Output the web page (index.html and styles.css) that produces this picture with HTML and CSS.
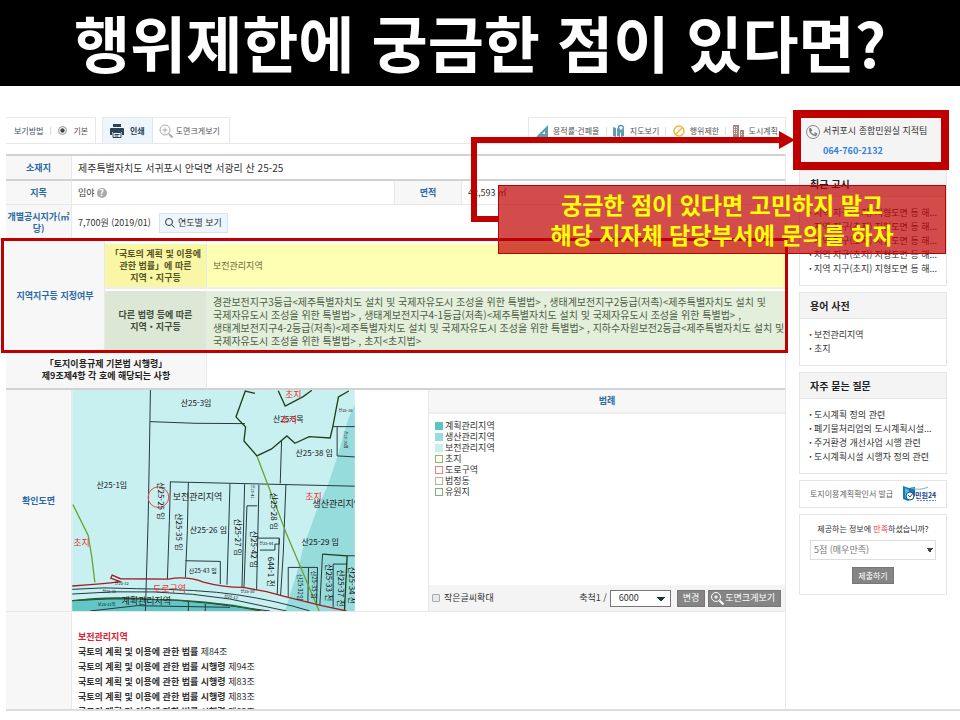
FILE: index.html
```html
<!doctype html>
<html lang="ko">
	<head>
		<title>행위제한에 궁금한 점이 있다면?</title>
		<meta charset="utf-8">
		<meta name="viewport" content="width=device-width, initial-scale=1">
		<link rel="stylesheet" href="styles.css">
	</head>

	<body>
		<h1 class="title">행위제한에 궁금한 점이 있다면?</h1>

		<div class="page">
			<div class="columns">
				<main class="main">
					<div class="toolbar">
						<div class="tools tools-view">
							<span class="tool-name">보기방법</span>
							<span class="bar"></span>
							<label class="radio"><input type="radio" name="view" checked> 기본</label>
						</div>
						<div class="tools tools-print">
							<button type="button" class="tool print">
								<svg width="14" height="14" viewBox="0 0 14 14"><path fill="#2c4257" d="M3 0h8v3H3zM1 4h12q1 0 1 1v6h-2V8H2v3H0V5q0-1 1-1z"/><path fill="#fff" stroke="#2c4257" d="M3 8.500h8v5H3z"/><path stroke="#2c4257" d="M4.500 10.500h5M4.500 12h4"/></svg>
								인쇄
							</button>
							<button type="button" class="tool">
								<svg width="14" height="14" viewBox="0 0 14 14" fill="none" stroke="#aaa"><circle cx="6" cy="6" r="5"/><path d="M6 3.500v5M3.500 6h5"/><path stroke-width="2" d="M10 10l3.500 3.500"/></svg>
								도면크게보기
							</button>
						</div>
						<div class="tools tools-links">
							<a href="#">
								<svg width="12" height="12" viewBox="0 0 12 12"><path fill="#5f9bb3" fill-rule="evenodd" d="M12 0v12H0zM9 6v3H6z"/></svg>
								용적률·건폐율
							</a>
							<span class="bar"></span>
							<a href="#">
								<svg width="12" height="14" viewBox="0 0 12 14"><path fill="#5f9bb3" d="M0 3l3 1v9l-3-1zM4 4l3 2v7l-3-1zM8 7l3-2v7l-3 1z"/><path fill="#fff" stroke="#5f9bb3" stroke-width="1.500" d="M8 8L5.500 4a2.500 2.500 0 1 1 5 0z"/></svg>
								지도보기
							</a>
							<span class="bar"></span>
							<a href="#">
								<svg width="12" height="12" viewBox="0 0 12 12" fill="none" stroke="#f2b53a" stroke-width="1.500"><circle cx="6" cy="6" r="5"/><path d="M2.500 9.500l7-7"/></svg>
								행위제한
							</a>
							<span class="bar"></span>
							<a href="#">
								<svg width="11" height="12" viewBox="0 0 11 12"><path fill="#a58a84" d="M0 0h6v12H0zM7 5h4v7H7z"/><path stroke="#fff" d="M1 2.500h4M1 4.500h4M1 6.500h4M1 8.500h4M8 7.500h2M8 9.500h2" stroke-dasharray="1 1"/></svg>
								도시계획
							</a>
						</div>
					</div>

					<table class="land">
						<colgroup>
							<col class="c-head"><col class="c-gap"><col class="c-sub"><col class="c-mid"><col class="c-area"><col>
						</colgroup>
						<tr class="r-address">
							<th scope="row">소재지</th>
							<td colspan="5">제주특별자치도 서귀포시 안덕면 서광리 산 25-25</td>
						</tr>
						<tr class="r-kind">
							<th scope="row">지목</th>
							<td colspan="3">임야<span class="help">?</span></td>
							<th scope="row" class="area">면적</th>
							<td>42,593 ㎡</td>
						</tr>
						<tr class="r-price">
							<th scope="row" class="tight">개별공시지가(㎡<br>당)</th>
							<td colspan="5">
								<div class="price">
									7,700원 (2019/01)
									<button type="button" class="year">
										<svg width="10" height="10" viewBox="0 0 10 10" fill="none" stroke="#333"><circle cx="4" cy="4" r="3.500"/><path d="M6.500 6.500L9.500 9.500"/></svg>
										연도별 보기
									</button>
								</div>
							</td>
						</tr>
						<tr class="r-plan">
							<th scope="rowgroup" colspan="2" rowspan="2">지역지구등 지정여부</th>
							<th scope="row" class="sub plan">「국토의 계획 및 이용에<br>관한 법률」에 따른<br>지역・지구등</th>
							<td colspan="3" class="plan">보전관리지역</td>
						</tr>
						<tr class="r-law">
							<th scope="row" class="sub law">다른 법령 등에 따른<br>지역・지구등</th>
							<td colspan="3" class="law">경관보전지구3등급&lt;제주특별자치도 설치 및 국제자유도시 조성을 위한 특별법&gt; , 생태계보전지구2등급(저촉)&lt;제주특별자치도 설치 및<br>국제자유도시 조성을 위한 특별법&gt; , 생태계보전지구4-1등급(저촉)&lt;제주특별자치도 설치 및 국제자유도시 조성을 위한 특별법&gt; ,<br>생태계보전지구4-2등급(저촉)&lt;제주특별자치도 설치 및 국제자유도시 조성을 위한 특별법&gt; , 지하수자원보전2등급&lt;제주특별자치도 설치 및<br>국제자유도시 조성을 위한 특별법&gt; , 초지&lt;초지법&gt;</td>
						</tr>
						<tr class="r-decree">
							<th scope="row" colspan="3" class="dark">「토지이용규제 기본법 시행령」<br>제9조제4항 각 호에 해당되는 사항</th>
							<td colspan="3"></td>
						</tr>
						<tr class="r-map">
							<th scope="row">확인도면</th>
							<td colspan="5" class="flush">
								<div class="drawing">
									<svg class="map" viewBox="6 7 849 664">
										<rect x="6" y="7" width="849" height="664" fill="#c8f0f1"/>
										<!-- zoning areas -->
										<path fill="#97dcdc" d="M855 50L835 95 802 210 775 290 740 370 700 480 680 560 645 671H855z"/>
										<path fill="#62c6c6" d="M6 640Q120 622 260 636 420 645 500 652L590 671H6z"/>
										<!-- parcel lines -->
										<g fill="none" stroke="#26393c" stroke-width="3">
											<path d="M241 7L238 190 234 400 226 671M240 102L375 107 525 108M300 283L855 296M301 283L298 400 292 575M355 285L352 430 346 570M480 288L476 430 471 592M524 290L516 602M531 355H562M531 355L522 602M567 292L560 608M648 292L640 500 632 625M635 160L631 288M346 520L451 522V590M562 452H628M570 488H615V470H628V452L622 620M655 628V540H743L740 655M716 540L714 645M789 117H855M802 117V205L855 208M758 500L750 655M790 660V530H832M832 505H855"/>
											<path d="M6 606Q100 598 200 604 390 606 500 622 620 640 720 671M6 620Q260 600 480 635L650 671M6 640Q220 625 420 648L600 671M60 671L200 655 480 660M355 640V671M406 650V671"/>
										</g>
										<path fill="none" stroke="#203f18" stroke-width="4" d="M555 17L526 10 498 88 527 118 522 160 561 205 605 184 651 145 675 167 718 147 781 151 789 117 806 28 837 10M625 9L646 55 700 27 726 8M758 500L832 505 824 671"/>
										<path fill="none" stroke="#6da32d" stroke-width="4" d="M561 205L650 440 748 671M8 351L54 444 65 510 74 585"/>
										<path fill="none" stroke="#315d2b" stroke-width="4" d="M6 640Q120 626 240 636 420 636 572 671"/>
										<path fill="none" stroke="#9e1f26" stroke-width="4" d="M6 596Q100 590 150 583L122 572 126 563 151 574 295 575Q350 565 400 584 460 600 520 600L590 613 640 626 756 655 830 671"/>
										<circle cx="265" cy="329" r="31" fill="none" stroke="#e34646" stroke-width="3"/>
										<!-- lot numbers -->
										<g class="lot">
											<text x="332" y="56">산25-3임</text>
											<text x="79" y="301">산25-1임</text>
											<text x="609" y="103">산25-5목</text>
											<text x="677" y="206">산25-38 임</text>
											<text x="359" y="437">산25-26 임</text>
											<text x="695" y="473">산25-29 임</text>
											<text class="lot-s" x="356" y="556">산25-43 임</text>
											<text class="lot-xs" x="806" y="73">산25-16</text>
											<text class="lot-xs" x="134" y="592">산25-32</text>
											<text class="lot-xs" x="96" y="617">산25-31</text>
											<text class="lot-xs" x="83" y="657">보25-21임</text>
											<text class="lot-xs" x="512" y="618">산25-30</text>
											<text class="lot-xs" x="568" y="473">산25-44</text>
											<text class="lot-xs" transform="translate(462 630) rotate(8)">산25-12</text>
											<text transform="translate(264 284) rotate(90)">산25-25 임</text>
											<text transform="translate(319 377) rotate(90)">산25-35 임</text>
											<text transform="translate(496 394) rotate(90)">산25-27 임</text>
											<text transform="translate(542 430) rotate(90)">산25-42 임</text>
											<text transform="translate(604 316) rotate(90)">산25-28 임</text>
											<text transform="translate(594 508) rotate(90)">644-1 전</text>
											<text transform="translate(770 530) rotate(90)">산25-33 전</text>
											<text transform="translate(804 546) rotate(90)">산25-37 전</text>
											<text transform="translate(838 538) rotate(90)">산25-34 전</text>
											<text class="lot-s" transform="translate(725 550) rotate(90)">산25-35 임</text>
											<text class="lot-s" transform="translate(683 560) rotate(90)">산25-32임</text>
											<text class="lot-xs" transform="translate(824 130) rotate(90)">산25-39임</text>
											<text class="lot-xs" transform="translate(543 292) rotate(90)">산25-41</text>
										</g>
										<g class="zone">
											<text x="308" y="338">보전관리지역</text>
											<text x="728" y="360">생산관리지역</text>
											<text x="154" y="651">계획관리지역</text>
										</g>
										<g class="zone red">
											<text x="645" y="30">초지</text>
											<text x="632" y="105">초지</text>
											<text x="706" y="338">초지</text>
											<text x="9" y="476">초지</text>
											<text x="249" y="614">도로구역</text>
										</g>
									</svg>
									<div class="legend">
										<h2>범례</h2>
										<ul>
											<li><i class="key k-plan"></i>계획관리지역</li>
											<li><i class="key k-product"></i>생산관리지역</li>
											<li><i class="key k-keep"></i>보전관리지역</li>
											<li><i class="key k-grass"></i>초지</li>
											<li><i class="key k-road"></i>도로구역</li>
											<li><i class="key k-dong"></i>법정동</li>
											<li><i class="key k-park"></i>유원지</li>
										</ul>
										<div class="scale">
											<label class="check"><input type="checkbox"> 작은글씨확대</label>
											<label for="scale">축척1 /</label>
											<select id="scale"><option>6000</option></select>
											<button type="button" class="grey">변경</button>
											<button type="button" class="grey">
												<svg width="14" height="14" viewBox="0 0 14 14" fill="none" stroke="#fff"><circle cx="6" cy="6" r="4.500"/><path d="M6 4v4M4 6h4"/><path stroke-width="2" d="M9.500 9.500l4 4"/></svg>
												도면크게보기
											</button>
										</div>
									</div>
								</div>
							</td>
						</tr>
						<tr>
							<th></th>
							<td colspan="5" class="flush">
								<div class="rules">
									<h3>보전관리지역</h3>
									<p><b>국토의 계획 및 이용에 관한 법률</b> 제84조</p>
									<p><b>국토의 계획 및 이용에 관한 법률 시행령</b> 제94조</p>
									<p><b>국토의 계획 및 이용에 관한 법률 시행령</b> 제83조</p>
									<p><b>국토의 계획 및 이용에 관한 법률 시행령</b> 제83조</p>
									<p><b>국토의 계획 및 이용에 관한 법률 시행령</b> 제83조</p>
								</div>
							</td>
						</tr>
					</table>
				</main>

				<aside class="side">
					<div class="contact">
						<svg width="14" height="14" viewBox="0 0 14 14"><circle cx="7" cy="7" r="6.500" fill="none" stroke="#888"/><path fill="none" stroke="#777" stroke-width="1.500" stroke-linecap="round" d="M4 3.500Q3 9 9.500 10.500M4 3.500l1.500 2M9.500 10.500l1-1.500-1.500-1"/></svg>
						<div>
							<p>서귀포시 종합민원실 지적팀</p>
							<a href="tel:064-760-2132">064-760-2132</a>
						</div>
						<div class="contact-frame"></div>
					</div>

					<section class="card">
						<h2>최근 고시</h2>
						<ul>
							<li>지역 지구(초지) 지형도면 등 해...</li>
							<li>지역 지구(초지) 지형도면 등 해...</li>
							<li>지역 지구(초지) 지형도면 등 해...</li>
							<li>지역 지구(초지) 지형도면 등 해...</li>
							<li>지역 지구(초지) 지형도면 등 해...</li>
						</ul>
					</section>

					<section class="card">
						<h2>용어 사전</h2>
						<ul>
							<li>보전관리지역</li>
							<li>초지</li>
						</ul>
					</section>

					<section class="card">
						<h2>자주 묻는 질문</h2>
						<ul>
							<li>도시계획 정의 관련</li>
							<li>폐기물처리업의 도시계획시설...</li>
							<li>주거환경 개선사업 시행 관련</li>
							<li>도시계획시설 시행자 정의 관련</li>
						</ul>
					</section>

					<a href="#" class="card issue">
						토지이용계획확인서 발급
						<svg width="36" height="18" viewBox="0 0 36 18">
							<path fill="#1878b8" d="M1 1l6 2 6-1v9l-7 5-5-2z"/>
							<path fill="#55b9dc" d="M3 3l4 2v5l-4 3z"/>
							<circle cx="8" cy="11" r="4" fill="#fff" stroke="#174f91"/>
							<path fill="none" stroke="#174f91" d="M6 10l2 2 4-5"/>
							<path fill="none" stroke="#67b7cf" d="M9 3q9 3 17-1"/>
							<text class="logo" x="13" y="13">민원24</text>
							<path stroke="#6d83ae" d="M15 15.500h19" stroke-dasharray="2 1"/>
						</svg>
					</a>

					<form class="card survey">
						<label for="score">제공하는 정보에 <em>만족</em>하셨습니까?</label>
						<select id="score"><option>5점 (매우만족)</option></select>
						<button type="button" class="grey">제출하기</button>
					</form>
				</aside>
			</div>

			<div class="zone-frame"></div>
			<svg class="arrow" width="324" height="91" viewBox="0 0 324 91">
				<path fill="none" stroke="#c00000" stroke-width="6" d="M27 88H3V9H309"/>
				<path fill="#c00000" d="M308 0l16 9-16 9z"/>
			</svg>
			<p class="callout">궁금한 점이 있다면 고민하지 말고<br>해당 지자체 담당부서에 문의를 하자</p>
		</div>
	</body>
</html>
```
FILE: styles.css
```css
* {
	box-sizing:border-box;
}

body {
	margin:0;
	background:#fff;
	color:#333;
	font:9px/12px "Noto Sans CJK KR", sans-serif;
}

h1, h2, h3, p, ul {
	margin:0;
	padding:0;
}

ul {
	list-style:none;
}

a {
	color:inherit;
	text-decoration:none;
}

button, select, input {
	margin:0;
	font:inherit;
	color:inherit;
}

button {
	display:flex;
	align-items:center;
	justify-content:center;
	padding:0;
	border:0;
	background:none;
	white-space:nowrap;
}

select {
	appearance:none;
	border-radius:0;
}

svg {
	display:block;
	flex:none;
}

.title {
	height:86px;
	background:#000;
	color:#fff;
	font-size:61px;
	line-height:84px;
	font-weight:bold;
	text-align:center;
	white-space:nowrap;
}

.page {
	position:relative;
}

.columns {
	display:grid;
	grid-template-columns:minmax(0, 1fr) 148px;
	column-gap:13px;
	margin-left:6px;
	padding-right:13px;
	border-bottom:2px solid #ddd;
}

.main {
	padding-top:31px;
}

/* toolbar */

.toolbar {
	display:flex;
	height:27px;
	margin-bottom:10px;
	border-bottom:1px solid #e8e8e8;
	font-size:8px;
	color:#555;
}

.tools {
	display:flex;
	align-items:center;
	border:1px solid #e8e8e8;
	border-bottom:0;
}

.tools-view {
	gap:7px;
	width:90px;
	padding-left:8px;
	border-left:0;
}

.tool-name {
	color:#35566f;
}

.bar {
	width:1px;
	height:8px;
	background:#ddd;
}

.radio {
	display:flex;
	align-items:center;
	gap:6px;
}

.radio input {
	appearance:none;
	width:9px;
	height:9px;
	border:1px solid #999;
	border-radius:50%;
	background:radial-gradient(#444 35%, #eee 50%);
}

.tools-print {
	align-items:stretch;
	margin-left:6px;
}

.tool {
	gap:3px;
	padding:0 9px 0 6px;
}

.print {
	gap:6px;
	padding:0 7px;
	border-right:1px solid #dde8f0;
	background:#eef6fd;
	color:#2c4257;
	font-weight:bold;
}

.tools-links {
	justify-content:space-between;
	width:258px;
	margin-left:auto;
	padding:0 7px;
}

.tools-links a {
	display:flex;
	align-items:center;
	gap:5px;
}

/* land table */

.land {
	width:100%;
	table-layout:fixed;
	border-spacing:0;
	border-top:2px solid #d2d2d2;
	border-right:1px solid #e8e8e8;
}

.c-head {
	width:66px;
}

.c-gap {
	width:33px;
}

.c-sub {
	width:102px;
}

.c-mid {
	width:187px;
}

.c-area {
	width:68px;
}

.land th {
	padding:0;
	border-right:1px solid #e8e8e8;
	border-bottom:1px solid #e8e8e8;
	background:#f7f7f7;
	color:#2a6ba5;
	font-weight:bold;
}

.land td {
	padding:0 0 0 6px;
	border-bottom:1px solid #e8e8e8;
}

.land .tight {
	white-space:nowrap;
}

.land .area {
	border-left:1px solid #e8e8e8;
}

.r-address {
	height:25px;
}

.r-address td {
	font-size:10px;
}

.r-address th, .r-address td, .land .r-decree th, .land .r-decree td {
	border-bottom:2px solid #d2d2d2;
}

.r-kind {
	height:24px;
}

.r-price {
	height:36px;
}

.r-plan {
	height:48px;
}

.r-law {
	height:63px;
}

.r-decree {
	height:38px;
}

.help {
	display:inline-block;
	width:10px;
	margin-left:2px;
	border-radius:5px;
	background:#aaa;
	color:#fff;
	line-height:10px;
	font-weight:bold;
	text-align:center;
}

.price {
	display:flex;
	align-items:center;
	gap:8px;
}

.year {
	gap:3px;
	height:20px;
	padding:0 5px;
	border:1px solid #d6e4ee;
	background:#eef6fd;
}

.land .sub {
	color:#333;
}

.land .plan {
	border-top:3px solid #fff;
	border-bottom:2px solid #eee;
	background:#feffb3;
	color:#666633;
}

.land th.plan {
	background:#f9f7a6;
	color:#555520;
}

.land .law {
	border-top:2px solid #fff;
	background:#e3efdb;
	color:#4d5d47;
}

.land td.law {
	font-size:10px;
	line-height:13px;
	white-space:nowrap;
}

.land th.law {
	background:#dce8d5;
	color:#3f4d3a;
}

.land .dark {
	color:#222;
}

.land .flush {
	padding:0;
}

/* map and legend */

.drawing {
	display:flex;
	justify-content:space-between;
}

.map {
	width:283px;
	height:221px;
}

.lot {
	font-size:24px;
	fill:#111;
}

.lot .lot-s {
	font-size:18px;
}

.lot .lot-xs {
	font-size:12px;
}

.zone {
	font-size:27px;
	fill:#222;
}

.red {
	fill:#f03030;
}

.legend {
	display:flex;
	flex-direction:column;
	width:357px;
	border-left:1px solid #e8e8e8;
}

.legend h2 {
	border-bottom:2px solid #eee;
	background:#f7f7f7;
	color:#2a6ba5;
	font-size:9px;
	line-height:22px;
	text-align:center;
}

.legend ul {
	flex:1;
	padding:6px;
	line-height:11px;
}

.legend li {
	display:flex;
	align-items:center;
	gap:2px;
}

.key {
	width:8px;
	height:8px;
	border:1px solid;
}

.k-plan {
	border-color:#5bc4c4;
	background:#5bc4c4;
}

.k-product {
	border-color:#97dcdc;
	background:#97dcdc;
}

.k-keep {
	border-color:#c8f0f1;
	background:#c8f0f1;
}

.k-grass {
	border-color:#8fb763;
}

.k-road {
	border-color:#f08080;
}

.k-dong {
	border-color:#c0ac90;
}

.k-park {
	border-color:#7bae86;
}

.scale {
	display:flex;
	align-items:center;
	gap:3px;
	height:26px;
	padding:0 4px 0 3px;
	background:#f4f4f4;
}

.check {
	display:flex;
	align-items:center;
	gap:4px;
	margin-right:auto;
}

.check input {
	appearance:none;
	width:8px;
	height:8px;
	border:1px solid #aaa;
	border-radius:1px;
	background:#e8e8e8;
}

.scale select {
	width:61px;
	height:17px;
	margin-right:3px;
	padding:0 8px;
	border:1px solid #777;
	background:
		linear-gradient(to bottom left, #17344f 50%, transparent 50%) 46px 6px / 4px 5px no-repeat,
		linear-gradient(to bottom right, #17344f 50%, transparent 50%) 50px 6px / 4px 5px no-repeat,
		#fff;
}

.grey {
	height:17px;
	padding:0 5px;
	border:1px solid #777;
	background:#858585;
	color:#fff;
}

.scale .grey svg {
	margin:0 1px 0 -4px;
}

.rules {
	height:97px;
	padding:17px 0 0 6px;
	overflow:hidden;
	line-height:15px;
}

.rules h3 {
	color:#e02030;
	font-size:9px;
}

.land tr:last-child th, .land tr:last-child td {
	border-bottom:0;
}

/* side column */

.side {
	padding-top:26px;
}

.contact {
	position:relative;
	display:flex;
	gap:3px;
	height:56px;
	margin-bottom:2px;
	padding:13px 0 0 7px;
	background:#f4f4f4;
	white-space:nowrap;
}

.contact p {
	margin-bottom:8px;
}

.contact a {
	color:#2f7fe0;
	font-weight:bold;
}

.contact-frame {
	position:absolute;
	top:-2px;
	right:-2px;
	bottom:-2px;
	left:-6px;
	border:8px solid #c00000;
}

.card {
	margin-bottom:6px;
	border:1px solid #e5e5e5;
}

.card h2 {
	padding-left:10px;
	border-bottom:1px solid #e5e5e5;
	background:#f4f4f4;
	color:#222;
	font-size:10px;
	line-height:25px;
}

.card ul {
	padding:9px 0 9px 9px;
	line-height:14px;
	white-space:nowrap;
}

.card li::before {
	content:"·";
	margin-right:2px;
	font-weight:bold;
}

.issue {
	display:flex;
	align-items:center;
	justify-content:space-between;
	height:28px;
	padding:0 8px 0 10px;
	font-size:8px;
	color:#666;
	white-space:nowrap;
}

.logo {
	fill:#1c3f86;
	font-size:7px;
	font-weight:bold;
}

.survey {
	display:flex;
	flex-direction:column;
	align-items:center;
	height:81px;
	padding:8px 10px;
	font-size:8px;
	white-space:nowrap;
}

.survey em {
	color:#f03040;
	font-style:normal;
}

.survey select {
	width:100%;
	height:20px;
	margin:5px 0 7px;
	padding:0 3px;
	border:1px solid #ddd;
	background:
		linear-gradient(to bottom left, #444 50%, transparent 50%) 116px 7px / 3px 5px no-repeat,
		linear-gradient(to bottom right, #444 50%, transparent 50%) 119px 7px / 3px 5px no-repeat,
		#fff;
	color:#777;
	font-size:9px;
}

/* notes drawn over the page */

.zone-frame {
	position:absolute;
	top:152px;
	right:172px;
	left:1px;
	height:115px;
	border:3px solid #c00000;
}

.arrow {
	position:absolute;
	top:45px;
	right:165px;
}

.callout {
	position:absolute;
	top:99px;
	right:14px;
	width:448px;
	height:69px;
	padding-top:3px;
	border:1px solid #c00000;
	background:rgba(192, 0, 0, .7);
	color:#ff0;
	font-size:23px;
	font-weight:bold;
	line-height:30px;
	text-align:center;
	white-space:nowrap;
}
```
